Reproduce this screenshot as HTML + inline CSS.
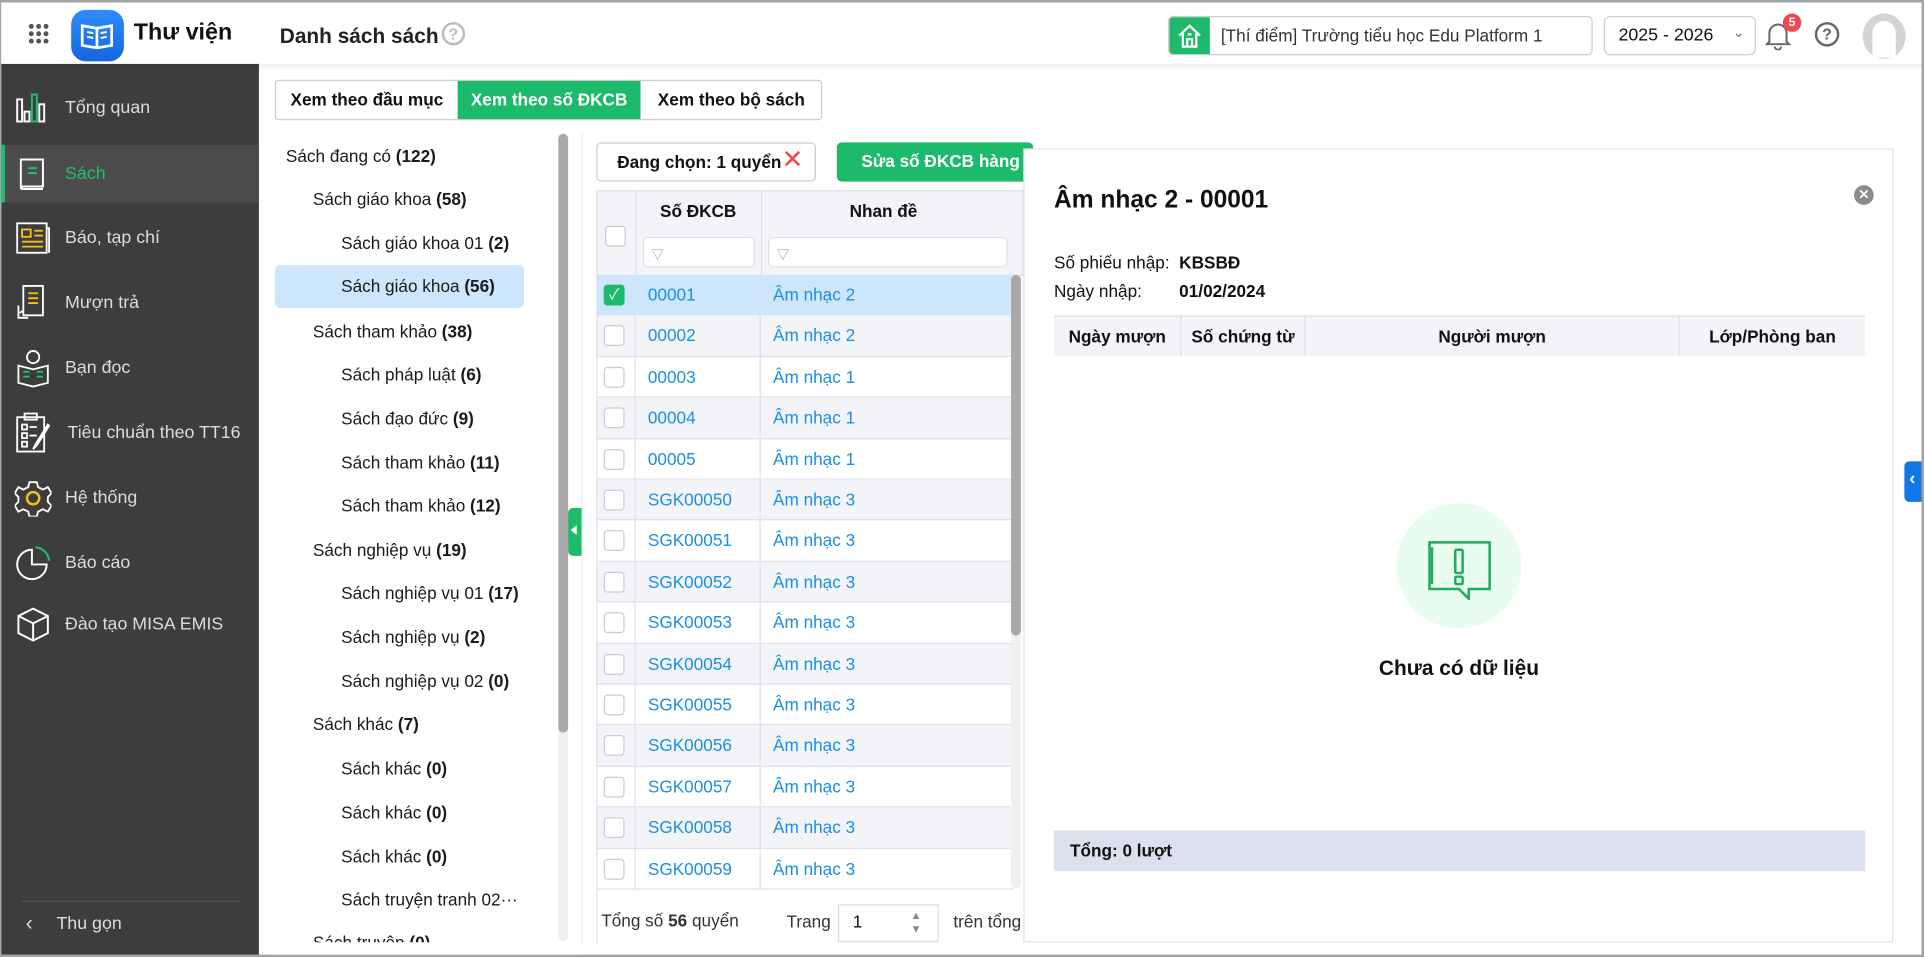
<!DOCTYPE html>
<html><head><meta charset="utf-8"><style>
*{box-sizing:border-box;margin:0;padding:0}
html,body{width:1924px;height:957px;overflow:hidden;background:#fff}
#w{position:absolute;left:0;top:0;width:1568px;height:780px;transform:scale(1.22704);transform-origin:0 0;font-family:"Liberation Sans","Noto Sans CJK SC",sans-serif;color:#111;font-size:14px;overflow:hidden;border:2px solid #a3a3a3;border-left-width:1px}
.a{position:absolute}
.hdr{left:0;top:0;width:1568px;height:50px;background:#fff;box-shadow:0 2px 4px rgba(0,0,0,.08);z-index:3}
.side{left:0;top:50px;width:210px;height:730px;background:#3d3d3d}
.si{position:absolute;left:0;width:210px;height:46px;display:flex;align-items:center;color:#ddd;font-size:14.5px}
.si svg{position:absolute;left:11px}
.si span{position:absolute;left:52px}
.tree div{position:absolute;font-size:14px;color:#1a1a1a;white-space:nowrap}
.tree b{font-weight:700}
.row{position:absolute;left:485px;width:340px;height:33.4px;border-bottom:1px solid #dde0ea}
.row .cb{position:absolute;left:6px;top:8px;width:17px;height:17px;border:1px solid #ccc;border-radius:3px;background:#fff}
.row .c1{position:absolute;left:42px;top:8px;color:#1a8fe3;font-size:14px}
.row .c2{position:absolute;left:144px;top:8px;color:#1a8fe3;font-size:14px}
.row:before{content:"";position:absolute;left:31px;top:0;bottom:0;border-left:1px solid #dde0ea}
.row:after{content:"";position:absolute;left:133px;top:0;bottom:0;border-left:1px solid #dde0ea}
.sh{background:#f3f4f8}
</style></head><body><div id="w">
<div class="a hdr">
 <svg class="a" style="left:22px;top:17px" width="17" height="17" viewBox="0 0 17 17" fill="#555"><circle cx="2.5" cy="2.5" r="2"/><circle cx="8.5" cy="2.5" r="2"/><circle cx="14.5" cy="2.5" r="2"/><circle cx="2.5" cy="8.5" r="2"/><circle cx="8.5" cy="8.5" r="2"/><circle cx="14.5" cy="8.5" r="2"/><circle cx="2.5" cy="14.5" r="2"/><circle cx="8.5" cy="14.5" r="2"/><circle cx="14.5" cy="14.5" r="2"/></svg>
 <div class="a" style="left:57px;top:6px;width:43px;height:42px;border-radius:12px;background:linear-gradient(#2f8cff,#1565e0)"></div>
 <svg class="a" style="left:63px;top:14px" width="30" height="26" viewBox="0 0 30 26" fill="none" stroke="#fff" stroke-width="2.2"><path d="M3 5v16l12 2 12-2V5l-12 2z M15 7v16"/><path d="M7 10l5 1M7 14l5 1M18 11l5-1M18 15l5-1" stroke-width="1.6"/></svg>
 <div class="a" style="left:108px;top:14px;font-size:19px;font-weight:700">Thư viện</div>
 <div class="a" style="left:227px;top:18px;font-size:17px;font-weight:700;color:#222">Danh sách sách</div>
 <div class="a" style="left:359px;top:16px;width:19px;height:19px;border:2px solid #bbb;border-radius:50%;color:#bbb;font-size:13px;font-weight:700;text-align:center;line-height:15px">?</div>
 <div class="a" style="left:951px;top:11px;width:346px;height:32px;border:1px solid #ccc;border-radius:4px;overflow:hidden">
  <div class="a" style="left:0;top:0;width:33px;height:32px;background:#1dba6b"></div>
  <svg class="a" style="left:6px;top:5px" width="21" height="21" viewBox="0 0 21 21" fill="none" stroke="#fff" stroke-width="1.8"><path d="M2 10L10.5 2 19 10M5 8v11h11V8M8.5 19v-6h4v6M9 9h3"/></svg>
  <div class="a" style="left:42px;top:7px;font-size:14px;color:#333">[Thí điểm] Trường tiểu học Edu Platform 1</div>
 </div>
 <div class="a" style="left:1306px;top:11px;width:124px;height:32px;border:1px solid #ccc;border-radius:5px;font-size:14.5px;padding:7px 0 0 11px">2025 - 2026<span style="position:absolute;left:104px;top:5px;color:#777;font-size:12px">&#8964;</span></div>
 <svg class="a" style="left:1437px;top:15px" width="22" height="24" viewBox="0 0 22 24" fill="none" stroke="#666" stroke-width="1.6"><path d="M4 17V10a7 7 0 0114 0v7l2 2H2zM8.5 21a2.5 2.5 0 005 0"/></svg>
 <div class="a" style="left:1452px;top:9px;width:15px;height:15px;border-radius:50%;background:#f0484f;color:#fff;font-size:10px;font-weight:700;text-align:center;line-height:15px">5</div>
 <div class="a" style="left:1478px;top:16px;width:20px;height:20px;border:2px solid #666;border-radius:50%;color:#666;font-size:13px;font-weight:700;text-align:center;line-height:16px">?</div>
 <div class="a" style="left:1517px;top:9px;width:35px;height:37px;border-radius:50%;background:#d4d4d4"><div class="a" style="left:8px;top:6px;width:19px;height:30px;border-radius:10px 10px 0 0;background:#fff"></div></div>
</div>

<div class="a side">
 <div class="si" style="top:13px"><svg width="30" height="26" viewBox="0 0 30 26" fill="none" stroke="#fff" stroke-width="1.6"><rect x="2" y="6" width="4" height="18"/><rect x="8" y="16" width="4" height="8"/><rect x="14" y="2" width="4" height="22" stroke="#1fc16b"/><rect x="20" y="10" width="4" height="14"/></svg><span>Tổng quan</span></div>
 <div class="si" style="top:66px;height:47px;background:#4c4c4c;border-left:3px solid #1fc16b"><svg style="left:9px" width="26" height="30" viewBox="0 0 26 30" fill="none" stroke="#fff" stroke-width="1.6"><path d="M4 3h18v22H6a2 2 0 00-2 2zM4 27h18"/><path d="M10 10h7M10 14h7" stroke="#1fc16b"/></svg><span style="color:#1fc16b;left:49px">Sách</span></div>
 <div class="si" style="top:119px"><svg width="30" height="28" viewBox="0 0 30 28" fill="none" stroke="#fff" stroke-width="1.5"><rect x="2" y="2" width="24" height="24"/><path d="M26 6h2v20" /><rect x="6" y="7" width="7" height="6" stroke="#f3c21f"/><path d="M16 8h7M16 12h7M6 17h17M6 21h17" stroke="#f3c21f"/></svg><span>Báo, tạp chí</span></div>
 <div class="si" style="top:172px"><svg width="28" height="32" viewBox="0 0 28 32" fill="none" stroke="#fff" stroke-width="1.5"><path d="M7 2h16v24H7zM3 18v10h8M7 22l-3 2"/><path d="M11 8h8M11 12h8M11 16h8" stroke="#f3c21f"/></svg><span>Mượn trả</span></div>
 <div class="si" style="top:225px"><svg width="30" height="32" viewBox="0 0 30 32" fill="none" stroke="#fff" stroke-width="1.5"><circle cx="15" cy="7" r="5"/><path d="M3 14l12 3 12-3v14l-12 3-12-3z"/><path d="M7 19h5M7 23h5M18 19h5M18 23h5" stroke="#1fc16b"/></svg><span>Bạn đọc</span></div>
 <div class="si" style="top:278px"><svg width="30" height="34" viewBox="0 0 30 34" fill="none" stroke="#fff" stroke-width="1.5"><rect x="2" y="4" width="22" height="28"/><rect x="8" y="1" width="10" height="5"/><rect x="6" y="10" width="4" height="4"/><rect x="6" y="17" width="4" height="4"/><rect x="6" y="24" width="4" height="4"/><path d="M12 12h6M12 19h6M27 10l-10 16-2 4 3-3 10-16z"/></svg><span style="left:54px">Tiêu chuẩn theo TT16</span></div>
 <div class="si" style="top:331px"><svg width="30" height="30" viewBox="0 0 30 30" fill="none" stroke="#fff" stroke-width="1.5"><path d="M12 2h6l1 4 4 2 4-2 3 5-3 3v4l3 3-3 5-4-2-4 2-1 4h-6l-1-4-4-2-4 2-3-5 3-3v-4l-3-3 3-5 4 2 4-2z"/><circle cx="15" cy="15" r="5" stroke="#f3c21f" stroke-width="2"/></svg><span>Hệ thống</span></div>
 <div class="si" style="top:384px"><svg width="30" height="30" viewBox="0 0 30 30" fill="none" stroke="#fff" stroke-width="1.6"><path d="M14 4a12 12 0 1012 12H14z"/><path d="M17 2a12 12 0 0111 11" stroke="#1fc16b"/></svg><span>Báo cáo</span></div>
 <div class="si" style="top:434px"><svg width="30" height="30" viewBox="0 0 30 30" fill="none" stroke="#fff" stroke-width="1.6"><path d="M15 2l12 6v14l-12 6-12-6V8zM3 8l12 6 12-6M15 14v14"/></svg><span>Đào tạo MISA EMIS</span></div>
 <div class="a" style="left:17px;top:682px;width:178px;border-top:1px solid #555"></div>
 <div class="a" style="left:20px;top:691px;color:#ddd;font-size:17px">&#8249;</div>
 <div class="a" style="left:45px;top:693px;color:#ddd;font-size:14.5px">Thu gọn</div>
</div>

<!-- tabs -->
<div class="a" style="left:223px;top:63px;width:446px;height:33px;border:1px solid #ccc;border-radius:3px;overflow:hidden;font-size:14px;font-weight:700">
 <div class="a" style="left:0;top:0;width:148px;height:31px;text-align:center;line-height:31px">Xem theo đầu mục</div>
 <div class="a" style="left:148px;top:0;width:149px;height:31px;background:#1dba6b;color:#fff;text-align:center;line-height:31px">Xem theo số ĐKCB</div>
 <div class="a" style="left:297px;top:0;width:148px;height:31px;text-align:center;line-height:31px">Xem theo bộ sách</div>
</div>

<!-- tree -->
<div class="a" style="left:223px;top:214px;width:203px;height:35px;background:#cde6fc;border-radius:4px"></div>
<div class="tree">
<div style="left:232px;top:117px">Sách đang có <b>(122)</b></div>
<div style="left:254px;top:152px">Sách giáo khoa <b>(58)</b></div>
<div style="left:277px;top:188px">Sách giáo khoa 01 <b>(2)</b></div>
<div style="left:277px;top:223px">Sách giáo khoa <b>(56)</b></div>
<div style="left:254px;top:260px">Sách tham khảo <b>(38)</b></div>
<div style="left:277px;top:295px">Sách pháp luật <b>(6)</b></div>
<div style="left:277px;top:331px">Sách đạo đức <b>(9)</b></div>
<div style="left:277px;top:367px">Sách tham khảo <b>(11)</b></div>
<div style="left:277px;top:402px">Sách tham khảo <b>(12)</b></div>
<div style="left:254px;top:438px">Sách nghiệp vụ <b>(19)</b></div>
<div style="left:277px;top:473px">Sách nghiệp vụ 01 <b>(17)</b></div>
<div style="left:277px;top:509px">Sách nghiệp vụ <b>(2)</b></div>
<div style="left:277px;top:545px">Sách nghiệp vụ 02 <b>(0)</b></div>
<div style="left:254px;top:580px">Sách khác <b>(7)</b></div>
<div style="left:277px;top:616px">Sách khác <b>(0)</b></div>
<div style="left:277px;top:652px">Sách khác <b>(0)</b></div>
<div style="left:277px;top:688px">Sách khác <b>(0)</b></div>
<div style="left:277px;top:723px">Sách truyện tranh 02···</div>
<div style="left:254px;top:758px;height:8px;overflow:hidden">Sách truyện <b>(0)</b></div>
</div>
<div class="a" style="left:221px;top:766px;width:250px;height:14px;background:#fff"></div>
<div class="a" style="left:454px;top:107px;width:8px;height:658px;background:#efefef;border-radius:4px"></div>
<div class="a" style="left:454px;top:107px;width:8px;height:488px;background:#a9a9a9;border-radius:4px"></div>
<div class="a" style="left:462px;top:412px;width:11px;height:39px;background:#1dba6b;border-radius:4px 0 0 4px"></div>
<div class="a" style="left:464px;top:426px;border:4px solid transparent;border-right:5px solid #fff;border-left:0"></div>
<div class="a" style="left:473px;top:107px;height:660px;border-left:1px solid #eee"></div>

<!-- list -->
<div class="a" style="left:485px;top:114px;width:179px;height:32px;border:1px solid #ccc;border-radius:4px;font-size:14px;font-weight:700;padding:7px 0 0 16px">Đang chọn: 1 quyển<span style="position:absolute;left:150px;top:1px;color:#f0484f;font-size:21px;font-weight:400">✕</span></div>
<div class="a" style="left:681px;top:114px;width:160px;height:32px;background:#1dba6b;border-radius:4px;color:#fff;font-size:14px;font-weight:700;padding:7px 0 0 20px;white-space:nowrap;overflow:hidden">Sửa số ĐKCB hàng loạt</div>

<div class="a" style="left:485px;top:153px;width:348px;height:70px;background:#f3f4f8;border:1px solid #dde0ea">
 <div class="a" style="left:31px;top:0;height:70px;border-left:1px solid #dde0ea"></div>
 <div class="a" style="left:133px;top:0;height:70px;border-left:1px solid #dde0ea"></div>
 <div class="a" style="left:6px;top:28px;width:17px;height:17px;border:1px solid #ccc;border-radius:3px;background:#fff"></div>
 <div class="a" style="left:31px;top:8px;width:102px;text-align:center;font-weight:700">Số ĐKCB</div>
 <div class="a" style="left:133px;top:8px;width:200px;text-align:center;font-weight:700">Nhan đề</div>
 <div class="a" style="left:37px;top:37px;width:91px;height:25px;background:#fff;border:1px solid #dde0ea;border-radius:4px;color:#888;font-size:10px;padding:5px 0 0 6px">▽</div>
 <div class="a" style="left:139px;top:37px;width:195px;height:25px;background:#fff;border:1px solid #dde0ea;border-radius:4px;color:#888;font-size:10px;padding:5px 0 0 6px">▽</div>
</div>
<div class="row" style="top:222px;background:#cde6fc"><div class="cb" style="background:#1dba6b;border-color:#1dba6b;color:#fff;font-size:12px;text-align:center;line-height:15px">✓</div><div class="c1">00001</div><div class="c2">Âm nhạc 2</div></div>
<div class="row sh" style="top:255.4px"><div class="cb"></div><div class="c1">00002</div><div class="c2">Âm nhạc 2</div></div>
<div class="row" style="top:288.8px"><div class="cb"></div><div class="c1">00003</div><div class="c2">Âm nhạc 1</div></div>
<div class="row sh" style="top:322.2px"><div class="cb"></div><div class="c1">00004</div><div class="c2">Âm nhạc 1</div></div>
<div class="row" style="top:355.6px"><div class="cb"></div><div class="c1">00005</div><div class="c2">Âm nhạc 1</div></div>
<div class="row sh" style="top:389px"><div class="cb"></div><div class="c1">SGK00050</div><div class="c2">Âm nhạc 3</div></div>
<div class="row" style="top:422.4px"><div class="cb"></div><div class="c1">SGK00051</div><div class="c2">Âm nhạc 3</div></div>
<div class="row sh" style="top:455.8px"><div class="cb"></div><div class="c1">SGK00052</div><div class="c2">Âm nhạc 3</div></div>
<div class="row" style="top:489.2px"><div class="cb"></div><div class="c1">SGK00053</div><div class="c2">Âm nhạc 3</div></div>
<div class="row sh" style="top:522.6px"><div class="cb"></div><div class="c1">SGK00054</div><div class="c2">Âm nhạc 3</div></div>
<div class="row" style="top:556px"><div class="cb"></div><div class="c1">SGK00055</div><div class="c2">Âm nhạc 3</div></div>
<div class="row sh" style="top:589.4px"><div class="cb"></div><div class="c1">SGK00056</div><div class="c2">Âm nhạc 3</div></div>
<div class="row" style="top:622.8px"><div class="cb"></div><div class="c1">SGK00057</div><div class="c2">Âm nhạc 3</div></div>
<div class="row sh" style="top:656.2px"><div class="cb"></div><div class="c1">SGK00058</div><div class="c2">Âm nhạc 3</div></div>
<div class="row" style="top:689.6px"><div class="cb"></div><div class="c1">SGK00059</div><div class="c2">Âm nhạc 3</div></div>
<div class="a" style="left:485px;top:222px;height:545px;border-left:1px solid #dde0ea"></div>
<div class="a" style="left:823px;top:222px;width:8px;height:500px;background:#f0f0f0;border-radius:4px"></div>
<div class="a" style="left:823px;top:222px;width:8px;height:294px;background:#a9a9a9;border-radius:4px"></div>
<div class="a" style="left:489px;top:740px;font-size:14px;color:#333">Tổng số <b>56</b> quyển</div>
<div class="a" style="left:640px;top:741px;font-size:14px;color:#333">Trang</div>
<div class="a" style="left:682px;top:735px;width:82px;height:31px;border:1px solid #ddd;font-size:14px;padding:5px 0 0 11px">1<span style="position:absolute;left:58px;top:3px;color:#888;font-size:9px;line-height:11px">▲<br>▼</span></div>
<div class="a" style="left:776px;top:741px;font-size:14px;color:#333">trên tổng</div>

<!-- detail panel -->
<div class="a" style="left:833px;top:119px;width:709px;height:647px;background:#fff;border:1px solid #e2e2e2;z-index:2">
 <div class="a" style="left:24px;top:30px;font-size:20px;font-weight:700">Âm nhạc 2 - 00001</div>
 <div class="a" style="left:676px;top:29px;width:16px;height:16px;border-radius:50%;background:#8a8a8a;color:#fff;font-size:11px;font-weight:700;text-align:center;line-height:16px">✕</div>
 <div class="a" style="left:24px;top:84px;font-size:14px">Số phiếu nhập:</div>
 <div class="a" style="left:126px;top:84px;font-size:14px;font-weight:700">KBSBĐ</div>
 <div class="a" style="left:24px;top:107px;font-size:14px">Ngày nhập:</div>
 <div class="a" style="left:126px;top:107px;font-size:14px;font-weight:700">01/02/2024</div>
 <div class="a" style="left:24px;top:135px;width:661px;height:33px;background:#f3f4f8;border-top:1px solid #dde0ea;font-size:14px;font-weight:700">
  <div class="a" style="left:0;top:8px;width:103px;text-align:center">Ngày mượn</div>
  <div class="a" style="left:103px;top:0;width:102px;height:32px;border-left:1px solid #dde0ea;border-right:1px solid #dde0ea;text-align:center;padding-top:8px">Số chứng từ</div>
  <div class="a" style="left:205px;top:8px;width:304px;text-align:center">Người mượn</div>
  <div class="a" style="left:509px;top:0;width:152px;height:32px;border-left:1px solid #dde0ea;text-align:center;padding-top:8px">Lớp/Phòng ban</div>
 </div>
 <div class="a" style="left:303px;top:288px;width:102px;height:102px;border-radius:50%;background:#e8fcf0"></div>
 <svg class="a" style="left:327px;top:317px" width="56" height="50" viewBox="0 0 56 50" fill="none" stroke="#1dab5c" stroke-width="2"><path d="M3 3h49v38H35v8l-8-8H3z"/><path d="M5 7v30"/><rect x="24" y="9" width="6" height="19" rx="1"/><rect x="24" y="31" width="6" height="6" rx="1"/></svg>
 <div class="a" style="left:0;top:413px;width:708px;text-align:center;font-size:17px;font-weight:700">Chưa có dữ liệu</div>
 <div class="a" style="left:24px;top:555px;width:661px;height:33px;background:#dae0ec;font-size:14px;font-weight:700;padding:8px 0 0 13px">Tổng: 0 lượt</div>
</div>
<div class="a" style="left:1551px;top:374px;width:17px;height:33px;background:#0f78e6;border-radius:4px 0 0 4px;color:#fff;font-size:15px;font-weight:700;padding:6px 0 0 4px">‹</div>
</div></body></html>
